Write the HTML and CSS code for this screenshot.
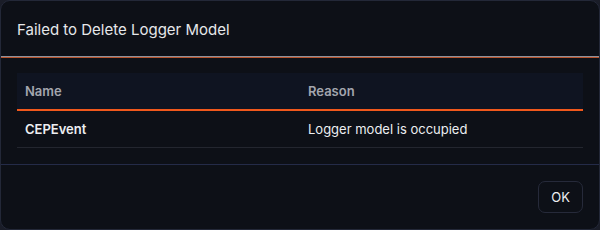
FILE: index.html
```html
<!DOCTYPE html>
<html lang="en">
<head>
  <meta charset="UTF-8">
  <title>Failed to Delete Logger Model</title>
  <link rel="stylesheet" href="styles.css">
</head>
<body>
  <div class="dialog">
    <div class="dialog-header">Failed to Delete Logger Model</div>
    <div class="dialog-body">
      <table class="result-table">
        <thead>
          <tr>
            <th>Name</th>
            <th>Reason</th>
          </tr>
        </thead>
        <tbody>
          <tr>
            <td class="name">CEPEvent</td>
            <td>Logger model is occupied</td>
          </tr>
        </tbody>
      </table>
    </div>
    <div class="dialog-footer">
      <button class="btn">OK</button>
    </div>
  </div>
</body>
</html>
```

FILE: styles.css
```css
html, body {
  margin: 0;
  height: 100%;
}

body {
  background: #1a1d28;
  font-family: Inter, "Noto Sans", sans-serif;
  color: #e8e9ec;
}

.dialog {
  box-sizing: border-box;
  width: 600px;
  height: 230px;
  background: #0d1017;
  border: 1px solid #232838;
  border-radius: 10px;
  display: flex;
  flex-direction: column;
}

.dialog-header {
  height: 56px;
  box-sizing: border-box;
  padding: 19px 16px 0;
  font-size: 15px;
  color: #e6e7ea;
  border-bottom: 1px solid #8e929c;
  box-shadow: 0 1px 0 #b8532c;
}

.dialog-body {
  padding: 16px 16px 16px;
}

.result-table {
  width: 100%;
  border-collapse: collapse;
  font-size: 13px;
}

.result-table th {
  width: 50%;
  height: 36px;
  text-align: left;
  padding: 0 8px;
  font-weight: 600;
  color: #a3a6ae;
  background: #0f1421;
  border-bottom: 2px solid #f0581c;
}

.result-table td {
  height: 36px;
  padding: 0 8px;
  color: #eceef1;
  border-bottom: 1px solid #23262f;
}

.result-table td.name {
  font-weight: 600;
}

.dialog-footer {
  flex: 1;
  border-top: 1px solid #242b48;
  display: flex;
  justify-content: flex-end;
  align-items: center;
  padding: 0 16px;
}

.btn {
  height: 32px;
  padding: 0 12px;
  background: #0d1017;
  color: #eceef1;
  border: 1px solid #262a3a;
  border-radius: 7px;
  font-family: Inter, "Noto Sans", sans-serif;
  font-size: 13px;
  cursor: pointer;
}
```
